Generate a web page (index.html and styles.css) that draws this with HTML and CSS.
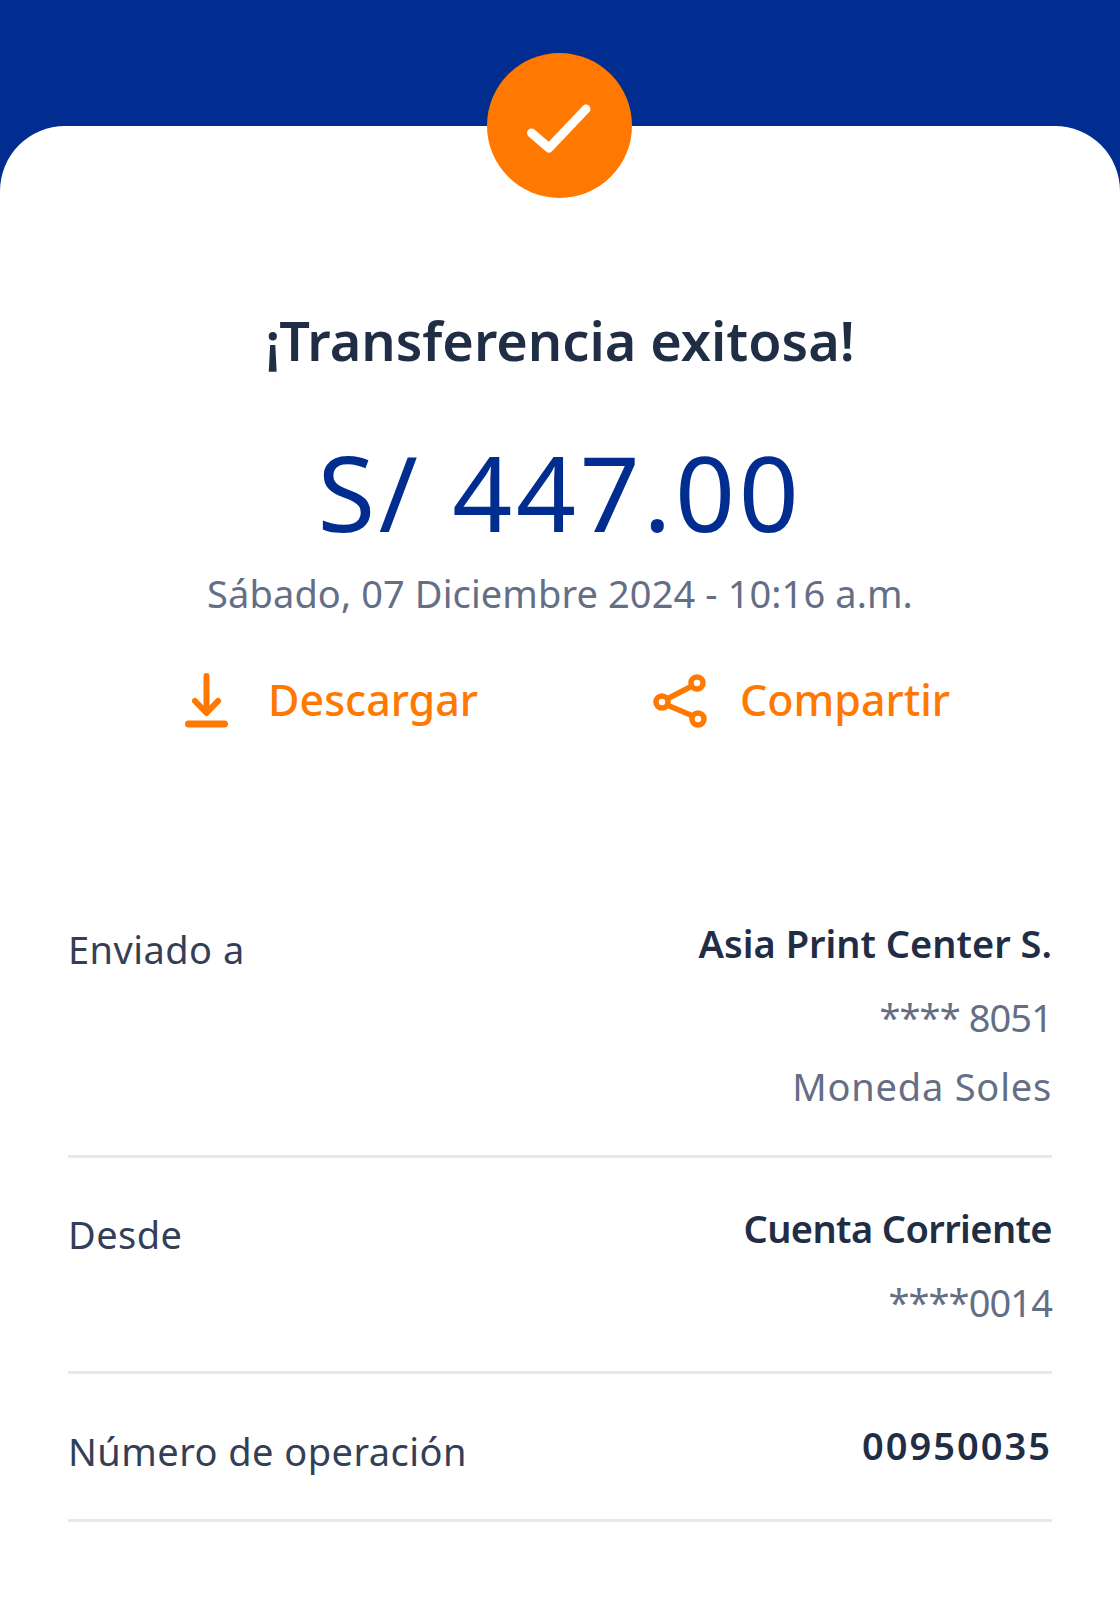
FILE: index.html
```html
<!DOCTYPE html>
<html lang="es">

<head>
  <meta charset="UTF-8">
  <title>Transferencia exitosa</title>
  <link rel="stylesheet" href="styles.css">
</head>

<body>
  <div class="top-band"></div>
  <div class="sheet">
    <div class="check-badge">
      <svg width="70" height="60" viewBox="0 0 70 60" fill="none">
        <path d="M6.5 37 L24 52 L61 13" stroke="#fff" stroke-width="9" stroke-linecap="round" stroke-linejoin="round" />
      </svg>
    </div>

    <h1>¡Transferencia exitosa!</h1>
    <div class="amount">S/ 447.00</div>
    <div class="date">Sábado, 07 Diciembre 2024 - 10:16 a.m.</div>

    <div class="actions">
      <a class="action action-download">
        <svg width="44" height="56" viewBox="0 0 44 56" fill="none" stroke="#ff7800" stroke-width="6" stroke-linecap="round" stroke-linejoin="round">
          <path d="M22.5 4 V40 M11 29 L22.5 41 L34 29" />
          <path d="M4.5 52 H40.5" stroke-width="7" />
        </svg>
        <span>Descargar</span>
      </a>
      <a class="action action-share">
        <svg width="56" height="56" viewBox="0 0 56 56" fill="none" stroke="#ff7800" stroke-width="5.5">
          <circle cx="46" cy="11" r="6" />
          <circle cx="11" cy="30" r="6" />
          <circle cx="47" cy="47" r="6" />
          <path d="M16 27 L41 14 M16 33 L42 44" />
        </svg>
        <span>Compartir</span>
      </a>
    </div>

    <div class="details">
      <div class="row row-sent">
        <div class="label">Enviado a</div>
        <div class="values">
          <div class="value-main">Asia Print Center S.</div>
          <div class="value-sub value-first value-num">**** 8051</div>
          <div class="value-sub value-text">Moneda Soles</div>
        </div>
      </div>
      <div class="row row-from">
        <div class="label">Desde</div>
        <div class="values">
          <div class="value-main value-tight">Cuenta Corriente</div>
          <div class="value-sub value-first value-num">****0014</div>
        </div>
      </div>
      <div class="row row-op">
        <div class="label">Número de operación</div>
        <div class="values">
          <div class="value-main value-wide">00950035</div>
        </div>
      </div>
    </div>
  </div>
</body>

</html>
```

FILE: styles.css
```css
body {
  margin: 0;
  height: 1600px;
  overflow: hidden;
  background-color: #fff;
  font-family: "Noto Sans", Roboto, sans-serif;
  color: #1f2d45;
}

.top-band {
  height: 200px;
  margin-bottom: -74px;
  background-color: #002d8f;
}

.sheet {
  position: relative;
  height: 1474px;
  box-sizing: border-box;
  padding: 180px 68px 0;
  background-color: #fff;
  border-radius: 65px 65px 0 0;
}

.check-badge {
  position: absolute;
  top: -73px;
  left: 487px;
  width: 145px;
  height: 145px;
  border-radius: 50%;
  background-color: #ff7800;
  display: flex;
  align-items: center;
  justify-content: center;
}

h1 {
  margin: 0;
  text-align: center;
  font-size: 54px;
  line-height: 68px;
  font-weight: 600;
  color: #1f2d45;
}

.amount {
  margin-top: 58px;
  text-align: center;
  font-size: 105px;
  line-height: 120px;
  letter-spacing: 3.6px;
  color: #002d8f;
}

.date {
  margin-top: 16px;
  text-align: center;
  font-size: 38px;
  line-height: 50px;
  letter-spacing: 0.1px;
  color: #646e85;
}

.actions {
  margin-top: 52px;
  padding-left: 14px;
  display: flex;
  justify-content: center;
  gap: 173px;
  color: #ff7800;
}

.action {
  display: flex;
  align-items: center;
  gap: 40px;
  font-size: 43px;
  line-height: 60px;
  font-weight: 500;
}

.action-share {
  gap: 33px;
}

.details {
  margin-top: 188px;
}

.row {
  display: flex;
  justify-content: space-between;
  border-bottom: 3px solid #e6e8ee;
}

.row-sent {
  height: 237px;
}

.row-from {
  height: 168px;
  padding-top: 45px;
}

.row-op {
  height: 99px;
  padding-top: 46px;
}

.label {
  font-size: 38px;
  line-height: 50px;
  padding-top: 6px;
  letter-spacing: 0.45px;
  color: #333f56;
}

.values {
  text-align: right;
}

.value-main {
  font-size: 38px;
  line-height: 50px;
  font-weight: 600;
  color: #1f2d45;
}

.value-tight {
  letter-spacing: -0.6px;
}

.value-wide {
  letter-spacing: 2px;
}

.value-sub {
  margin-top: 19px;
  font-size: 38px;
  line-height: 50px;
  color: #646e85;
}

.value-first {
  margin-top: 24px;
}

.value-num {
  letter-spacing: -0.9px;
}

.value-text {
  letter-spacing: 0.8px;
}
```
